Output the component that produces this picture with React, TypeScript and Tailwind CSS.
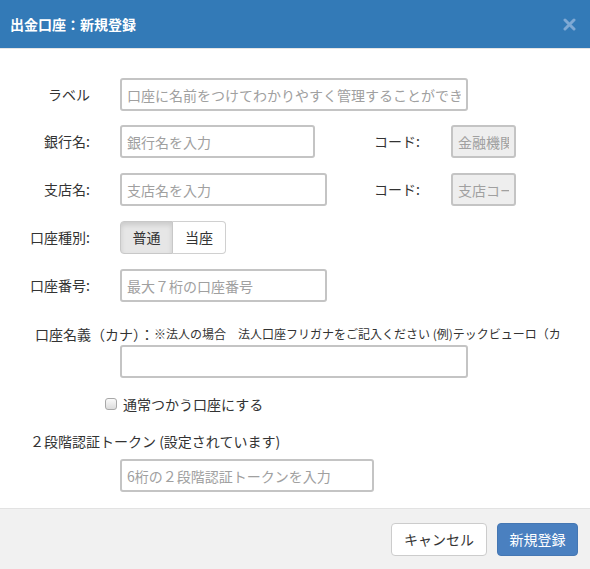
import React from 'react'

const font = { fontFamily: '"Noto Sans CJK JP", "Noto Sans", sans-serif' }

const inputCls =
  'h-[33px] border-2 border-[#c4c4c4] rounded-[3px] px-[5px] text-[14px] text-[#333] placeholder:text-[#a0a0a0] outline-none'

const Label = ({ children }: { children: React.ReactNode }) => (
  <div className="w-[90px] shrink-0 text-right text-[14px] text-[#333]">{children}</div>
)

const App = () => {
  return (
    <div className="w-[590px] h-[569px] bg-white flex flex-col overflow-hidden" style={font}>
      {/* header */}
      <div className="h-[48px] bg-[#337ab7] border-b border-[#e5e5e5] flex items-center justify-between pl-[10px] pr-[14px] shrink-0 box-content">
        <h1 className="text-white font-bold text-[14px]">出金口座：新規登録</h1>
        <svg width="13" height="13" viewBox="0 0 13 13">
          <path d="M2 2 L11 11 M11 2 L2 11" stroke="#7fa9d4" strokeWidth="3" strokeLinecap="round" />
        </svg>
      </div>

      {/* body */}
      <div className="flex-1 pt-[29px]">
        <div className="flex items-center h-[33px]">
          <Label>ラベル</Label>
          <input className={`${inputCls} ml-[30px] w-[348px] bg-white`} placeholder="口座に名前をつけてわかりやすく管理することができます" />
        </div>

        <div className="flex items-center h-[33px] mt-[14px]">
          <Label>銀行名:</Label>
          <input className={`${inputCls} ml-[30px] w-[195px] bg-white`} placeholder="銀行名を入力" />
          <span className="ml-[59px] w-[77px] text-[14px] text-[#333]">コード:</span>
          <input disabled className={`${inputCls} w-[65px] bg-[#eeeeee] px-[4px]`} placeholder="金融機関コード" />
        </div>

        <div className="flex items-center h-[33px] mt-[15px]">
          <Label>支店名:</Label>
          <input className={`${inputCls} ml-[30px] w-[207px] bg-white`} placeholder="支店名を入力" />
          <span className="ml-[47px] w-[77px] text-[14px] text-[#333]">コード:</span>
          <input disabled className={`${inputCls} w-[65px] bg-[#eeeeee] px-[4px]`} placeholder="支店コード" />
        </div>

        <div className="flex items-center h-[33px] mt-[15px]">
          <Label>口座種別:</Label>
          <div className="ml-[30px] flex h-[33px] text-[14px] text-[#333]">
            <button className="w-[53px] border border-[#c8c8c8] rounded-l-[4px] bg-[#e6e6e6] shadow-[inset_0_3px_5px_rgba(0,0,0,0.12)]">普通</button>
            <button className="w-[53px] border border-l-0 border-[#d0d0d0] rounded-r-[4px] bg-white">当座</button>
          </div>
        </div>

        <div className="flex items-center h-[33px] mt-[15px]">
          <Label>口座番号:</Label>
          <input className={`${inputCls} ml-[30px] w-[207px] bg-white`} placeholder="最大７桁の口座番号" />
        </div>

        <div className="mt-[22px] pl-[35px] h-[20px] whitespace-nowrap flex items-center">
          <span className="text-[14px] text-[#333]">口座名義（カナ）：</span>
          <span className="text-[12px] text-[#333]">※法人の場合　法人口座フリガナをご記入ください (例)テックビューロ（カ</span>
        </div>
        <div className="mt-[1px] pl-[120px]">
          <input className={`${inputCls} w-[348px] bg-white`} />
        </div>

        <div className="mt-[16px] pl-[105px] h-[20px] flex items-center">
          <span className="w-[12px] h-[12px] border border-[#a8a8a8] rounded-[3px] bg-gradient-to-b from-[#fafafa] to-[#dcdcdc]" />
          <span className="ml-[6px] text-[14px] text-[#333]">通常つかう口座にする</span>
        </div>

        <div className="mt-[17px] pl-[30px] h-[20px] flex items-center text-[14px] text-[#333]">
          ２段階認証トークン (設定されています)
        </div>
        <div className="mt-[8px] pl-[120px]">
          <input className={`${inputCls} w-[254px] bg-white`} placeholder="6桁の２段階認証トークンを入力" />
        </div>
      </div>

      {/* footer */}
      <div className="h-[61px] shrink-0 bg-[#f1f1f1] border-t border-[#e2e2e2] flex items-center justify-end gap-[10px] pr-[12px]">
        <button className="w-[96px] h-[33px] bg-white border border-[#cccccc] rounded-[4px] text-[14px] text-[#333]">キャンセル</button>
        <button className="w-[81px] h-[33px] bg-[#4a80c0] border border-[#4577b3] rounded-[4px] text-[14px] text-white">新規登録</button>
      </div>
    </div>
  )
}

export default App
